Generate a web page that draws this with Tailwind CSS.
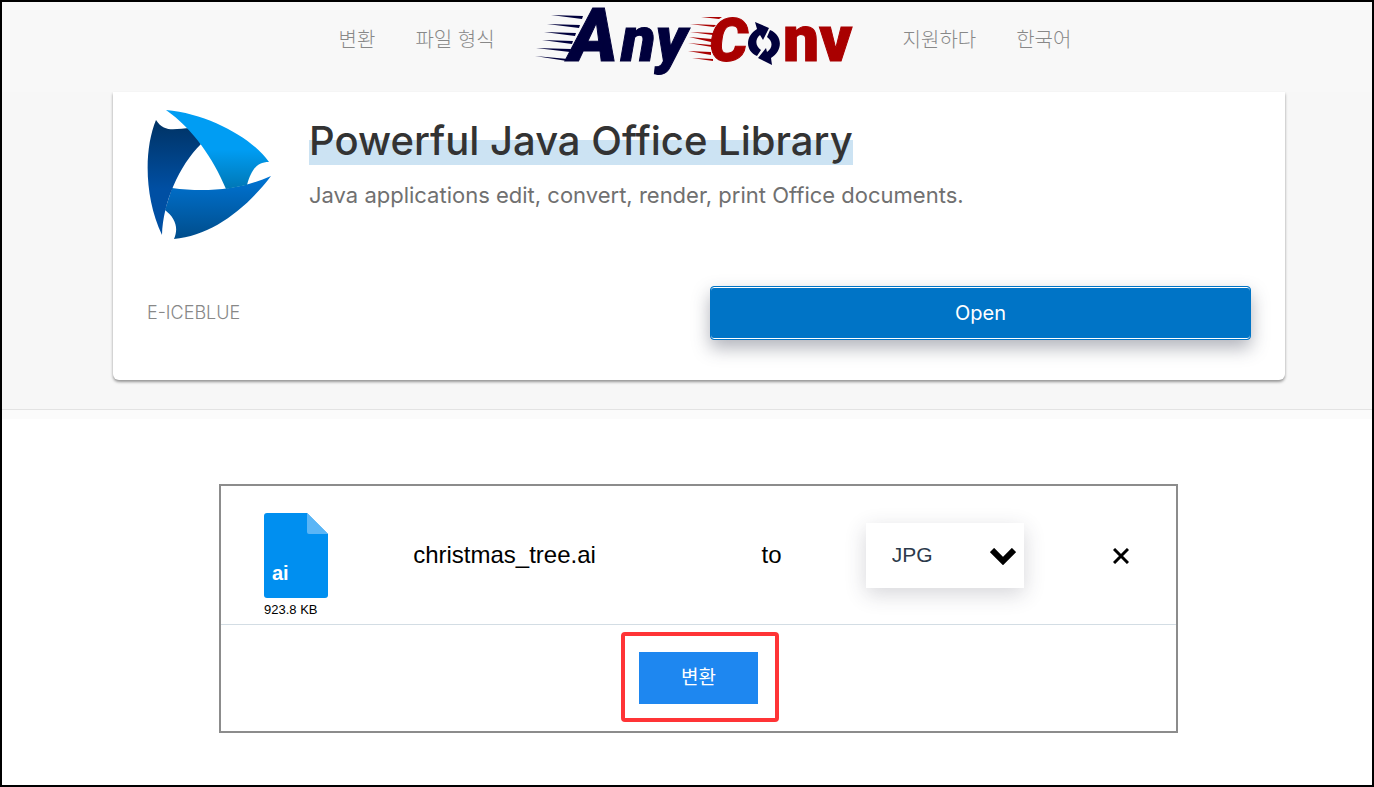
<!doctype html>
<html lang="ko">
<head>
  <meta charset="UTF-8">
  <meta name="viewport" content="width=device-width, initial-scale=1.0">
  <title>AnyConv</title>
  <script src="https://cdn.jsdelivr.net/npm/@tailwindcss/browser@4"></script>
</head>
<body class="min-h-screen border-2 border-black bg-white font-['Liberation_Sans','Noto_Sans_CJK_KR',sans-serif]">
  <header class="flex h-[90px] items-start justify-center gap-10 bg-[#f8f8f8] pl-9 text-xl font-light text-[#888] font-['Noto_Sans_CJK_KR',sans-serif]">
    <a href="#" class="pt-[23px] leading-7">변환</a>
    <a href="#" class="pt-[23px] leading-7">파일 형식</a>
    <a href="#" class="block" aria-label="AnyConv">
      <svg class="h-[74px] w-[328px] overflow-visible" viewBox="535 2 328 74">
        <g fill="#00003c">
          <path d="M551 15l32 1-1 3zM547 24l33 1-1 3zM544 32l32 1-1 3zM542 40l31 1-1 3zM536 48l35 1-1 3zM535 56l33 3-1 2z"/>
          <g stroke="#00003c" font-family="Roboto" font-weight="900" font-style="italic">
            <text x="569" y="61" font-size="74">A</text>
            <text x="621" y="61" font-size="63">ny</text>
          </g>
          <path d="M755 22L769 28 763 40 760 35C755 39 755 46 761 50L757 56C745 51 745 36 757 29Z"/>
          <path d="M772 65L758 58 766 48 767 52C773 48 773 41 767 37L770 30C783 35 783 51 771 58Z"/>
        </g>
        <g fill="#a90000">
          <path d="M701 17h21l-3 2zM690 24l26 1-2 2zM690 32l24 1-1 2zM689 37l23 2-1 3zM688 43l24 2v2zM688 51l23 1v3zM692 58l21 1v2z"/>
          <g stroke="#a90000" font-family="Roboto" font-weight="900">
            <text x="709" y="61" font-style="italic" font-size="61">C</text>
            <text x="783" y="61" font-size="64">nv</text>
          </g>
        </g>
      </svg>
    </a>
    <a href="#" class="pt-[23px] leading-7">지원하다</a>
    <a href="#" class="pt-[23px] leading-7">한국어</a>
  </header>

  <section class="border-b border-[#e3e3e3] bg-[#f7f7f7] pb-[29px] pl-6 font-[Inter,sans-serif]">
    <div class="mx-auto max-w-[1172px] rounded-b-md bg-white px-[34px] pt-[17px] pb-10 shadow-[0_2px_3px_rgba(0,0,0,0.4)]">
      <div class="flex gap-9">
        <svg class="h-[132px] w-[126px] shrink-0" viewBox="147 109 126 132">
          <defs>
            <linearGradient id="navy" x1="0" y1="0" x2="0" y2="1"><stop offset="0" stop-color="#003263"/><stop offset=".6" stop-color="#004fa3"/></linearGradient>
            <linearGradient id="sky" x1="0" y1="0" x2="0" y2="1"><stop offset=".5" stop-color="#009df3"/><stop offset="1" stop-color="#0077b5"/></linearGradient>
            <linearGradient id="blue" x1="0" y1="0" x2="0" y2="1"><stop offset="0" stop-color="#0074d4"/><stop offset="1" stop-color="#004d8b"/></linearGradient>
          </defs>
          <path fill="url(#blue)" d="M172 188C208 193 242 189 271 176C246 209 211 236 174 239C179 227 175 218 165 210Z"/>
          <path fill="url(#navy)" d="M156 120C144 149 144 197 162 235C163 202 179 166 201 144L191 128C177 128 165 134 156 120Z"/>
          <path fill="url(#sky)" d="M166 110C210 114 253 139 269 162C256 162 251 171 247 185L226 189C213 158 193 129 166 110Z"/>
        </svg>
        <div class="pt-3">
          <h1 class="text-[40px] leading-10 font-medium text-[#333]">
            <a href="#" class="block w-fit bg-linear-to-b from-transparent from-43% to-[#cce3f3] to-43% pb-1">Powerful Java Office Library</a>
          </h1>
          <p class="pt-4 text-[22px] leading-7 text-[#707070]">Java applications edit, convert, render, print Office documents.</p>
        </div>
      </div>
      <div class="flex items-center justify-between pt-[45px]">
        <span class="text-lg font-light text-[#888]">E-ICEBLUE</span>
        <button class="h-[54px] w-[49%] rounded border border-[#0074c6] bg-[#0074c6] text-xl text-white shadow-[inset_0_1px_0_#fff,inset_0_-1px_0_#fff,0_8px_18px_rgba(60,64,85,0.4)]">Open</button>
      </div>
    </div>
  </section>
  <div class="h-[9px] bg-[#fbfbfb]"></div>

  <main class="pt-[65px] pl-[23px]">
    <div class="mx-auto max-w-[959px] border-2 border-[#8c8c8c]">
      <div class="grid h-[139px] grid-cols-[149fr_348fr_104fr_247fr_63fr] items-center border-b border-[#d3dde4] pl-[43px]">
        <div class="self-end pb-[6px]">
          <svg class="h-[85px] w-16" viewBox="0 0 64 85">
            <path fill="#008ff0" d="M3 0h40l21 21v61a3 3 0 0 1-3 3H3a3 3 0 0 1-3-3V3a3 3 0 0 1 3-3z"/>
            <path fill="#5ab5f6" d="M43 0l21 21H45a2 2 0 0 1-2-2z"/>
            <text x="8" y="67" fill="#fff" font-family="Liberation Sans" font-weight="700" font-size="20">ai</text>
          </svg>
          <div class="pt-1 text-[13px] leading-4">923.8 KB</div>
        </div>
        <span class="text-2xl">christmas_tree.ai</span>
        <label for="format" class="text-2xl">to</label>
        <div class="relative w-[158px]">
          <select id="format" class="h-[65px] w-full appearance-none bg-white pl-[26px] text-[21px] text-[#2c3a4b] shadow-[0_6px_20px_rgba(50,50,70,0.2)]">
            <option>JPG</option>
          </select>
          <svg class="pointer-events-none absolute top-[25px] right-2 h-[17px] w-[26px]" viewBox="0 0 26 17">
            <path d="M2 2l11 11L24 2" fill="none" stroke="#000" stroke-width="6"/>
          </svg>
        </div>
        <button aria-label="Remove" class="justify-self-start pt-[2px]">
          <svg class="h-4 w-4" viewBox="0 0 16 16"><path d="M1 1l14 14M15 1L1 15" stroke="#000" stroke-width="3"/></svg>
        </button>
      </div>
      <div class="flex justify-center pt-[7px] pb-[9px] pl-[3px]">
        <div class="rounded-sm border-4 border-[#ff3436] pt-4 pr-[17px] pb-[14px] pl-[14px]">
          <button class="h-[52px] w-[119px] bg-[#1e87f0] pb-1 text-[19px] text-white font-['Noto_Sans_CJK_KR',sans-serif]">변환</button>
        </div>
      </div>
    </div>
  </main>
</body>
</html>
